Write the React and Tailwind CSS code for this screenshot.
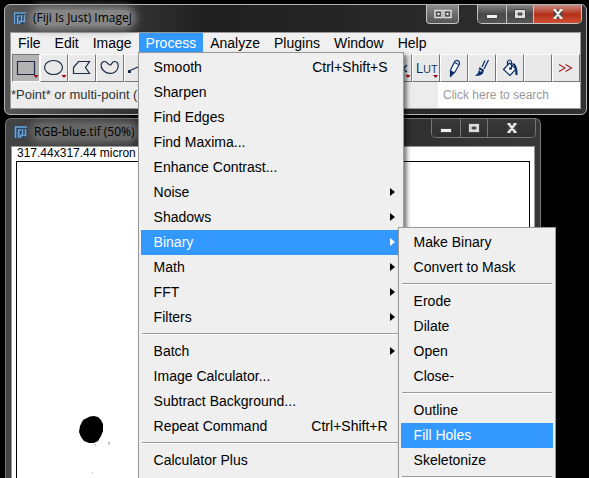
import React from "react";

const processMenu = [
  { label: "Smooth", shortcut: "Ctrl+Shift+S" },
  { label: "Sharpen" },
  { label: "Find Edges" },
  { label: "Find Maxima..." },
  { label: "Enhance Contrast..." },
  { label: "Noise", more: true },
  { label: "Shadows", more: true },
  { label: "Binary", more: true, active: true },
  { label: "Math", more: true },
  { label: "FFT", more: true },
  { label: "Filters", more: true },
  null,
  { label: "Batch", more: true },
  { label: "Image Calculator..." },
  { label: "Subtract Background..." },
  { label: "Repeat Command", shortcut: "Ctrl+Shift+R" },
  null,
  { label: "Calculator Plus" },
];

const binaryMenu = [
  { label: "Make Binary" },
  { label: "Convert to Mask" },
  null,
  { label: "Erode" },
  { label: "Dilate" },
  { label: "Open" },
  { label: "Close-" },
  null,
  { label: "Outline" },
  { label: "Fill Holes", active: true },
  { label: "Skeletonize" },
  null,
];

function FijiIcon() {
  return (
    <svg width="14" height="14" viewBox="0 0 14 14" className="shrink-0" aria-hidden="true">
      <path d="M0 1h13v9h-2v3H0z" fill="#29435e" />
      <path d="M1.500 13V2H13M4.500 13V5H7M4.500 8.500H6M8.500 4v6.500H6.500V13M11.500 4v6.500H9.500" fill="none" stroke="#6fa6da" strokeWidth="1.500" />
    </svg>
  );
}

function TitleBar({ title, dim, children }) {
  return (
    <header className="flex items-start justify-between h-[27px] pl-[8px] pr-[4px]">
      <div className="flex items-center gap-[6px] h-[26px]">
        <FijiIcon />
        <h1 className={dim
          ? "font-['Open_Sans','Noto_Sans',sans-serif] text-[12px] leading-[16px] text-black whitespace-nowrap rounded-full bg-[#656565] shadow-[0_0_7px_4px_#656565]"
          : "font-['Open_Sans','Noto_Sans',sans-serif] text-[12px] leading-[16px] text-black whitespace-nowrap rounded-full bg-[#858585] shadow-[0_0_8px_4px_#858585]"}>
          {title}
        </h1>
      </div>
      <div className="flex gap-[18px]">{children}</div>
    </header>
  );
}

function CaptionButtons({ dim }) {
  const face = dim ? "bg-linear-to-b from-[#393939] to-[#303030]" : "bg-linear-to-b from-[#858585] via-[#4a4a4a] via-50% to-[#555]";
  const close = dim ? "bg-linear-to-b from-[#393939] to-[#303030]" : "bg-linear-to-b from-[#c78a80] via-[#b5301a] via-50% to-[#cf4f32]";
  const frame = dim ? "border-[#777] divide-[#777]" : "border-[#c4c4c4] divide-[#c4c4c4]";
  return (
    <div className={`flex h-[19px] border border-t-0 divide-x rounded-b-[5px] overflow-hidden ${frame}`}>
      <button aria-label="Minimize" className={`w-[29px] flex justify-center items-center ${face}`}>
        <svg width="12" height="12"><path d="M.5 6.500h11v4H.5z" fill="#eee" stroke="#444" /></svg>
      </button>
      <button aria-label="Maximize" className={`w-[27px] flex justify-center items-center ${face}`}>
        <svg width="12" height="12"><path d="M.5 1.500h11v9H.5z" fill="#ddd" stroke="#444" /><path d="M4 5h4v2H4z" fill="#444" stroke="#555" /></svg>
      </button>
      <button aria-label="Close" className={`w-[47px] flex justify-center items-center ${close}`}>
        <svg width="14" height="12"><path d="M4 2.500l6 7M10 2.500l-6 7" stroke="#444" strokeWidth="5" /><path d="M2.500 2h3M8.500 2h3M2.500 10h3M8.500 10h3M4 2l6 8M10 2l-6 8" stroke="#eee" strokeWidth="2.200" /></svg>
      </button>
    </div>
  );
}

function MenuList({ items, label, className }) {
  return (
    <ul role="menu" aria-label={label} className={`absolute border border-[#999] bg-[#efefef] px-[2px] pt-[2px] pb-[20px] text-[14px] text-black shadow-[3px_3px_4px_rgba(0,0,0,0.5)] ${className}`}>
      {items.map((item, i) =>
        item === null ? (
          <li key={i} role="separator" className="h-[9px] px-px pt-[3px]">
            <div className="h-[2px] border-t border-[#999] bg-white" />
          </li>
        ) : (
          <li key={i} role="none" className="relative">
            <button role="menuitem" className={`flex w-full h-[25px] items-center justify-between pb-[2px] pl-[13px] whitespace-nowrap ${item.more ? "pr-[6px]" : "pr-[13px]"} ${item.active ? "bg-[#3399ff] text-white" : ""}`}>
              <span>{item.label}</span>
              {item.shortcut && <span>{item.shortcut}</span>}
              {item.more && (
                <svg width="5" height="8" viewBox="0 0 5 8" aria-hidden="true"><path d="M0 0l5 4-5 4z" fill="currentColor" /></svg>
              )}
            </button>
            {item.label === "Binary" && (
              <MenuList items={binaryMenu} label="Binary" className="left-[257px] -top-[3px] w-[158px] z-10" />
            )}
          </li>
        )
      )}
    </ul>
  );
}

function Tool({ label, active, arrow, children }) {
  return (
    <button aria-label={label} className={`relative w-[28px] h-[28px] shrink-0 flex items-center justify-center border ${active ? "bg-[#b3b3b3] border-l-[#777] border-t-[#777] border-r-white border-b-white" : "bg-[#e9e9e9] border-l-white border-t-white border-r-[#777] border-b-[#777]"}`}>
      <svg width="26" height="26" viewBox="0 0 26 26" fill="none" stroke="#0b2e66" strokeWidth="1.200">
        {children}
        {arrow && <path d="M20.500 20h5L23 23z" fill="#a00010" stroke="none" />}
      </svg>
    </button>
  );
}

function Toolbar() {
  return (
    <div className="flex justify-between h-[29px] pt-px pl-px overflow-hidden">
      <div className="flex">
        <Tool label="Rectangle" active arrow><path d="M4.500 6.500h17v13h-17z" stroke="#1b2c44" /></Tool>
        <Tool label="Oval" arrow><ellipse cx="12.500" cy="12.500" rx="9" ry="7" stroke="#1b2c44" /></Tool>
        <Tool label="Polygon"><path d="M9.500 6.500h11l-4 6 4 6h-16v-6z" stroke="#1b2c44" /></Tool>
        <Tool label="Freehand"><path d="M7.500 6.500C3.500 6.500 3 12 6 15c4 4.500 11 4.500 14 0 2.500-4 1-8.500-2.500-8.500-3.500 0-2 3.500-4.500 3.500s-2-3.500-5.500-3.500z" stroke="#1b2c44" /></Tool>
        <Tool label="Line"><path d="M4 16L22 8" stroke="#1b2c44" /><path d="M3 15h3v3H3z" fill="#1b2c44" stroke="none" /></Tool>
      </div>
      <div className="flex">
        <Tool label="Developer menu" arrow><path d="M18 9v8M22 10l-4 4 4 3" /></Tool>
        <button aria-label="LUT" className="relative w-[28px] h-[28px] pl-px border border-l-white border-t-white border-r-[#777] border-b-[#777] bg-[#e9e9e9] text-[#0b2e66] font-['Open_Sans',sans-serif] text-[14px] leading-[24px] text-center">
          L<span className="text-[11px]">UT</span>
          <svg width="5" height="3" className="absolute right-px bottom-[3px]"><path d="M0 0h5L2.500 3z" fill="#a00010" /></svg>
        </button>
        <Tool label="Pencil"><path d="M9.500 15l4.500-9 2-.5 2 1 .5 2.500-4.500 8-4 4z" fill="#f6f8fb" strokeWidth="1.200" /><path d="M9.500 16l3 1.500-3 3.500zM13.500 7.500l4 2" fill="#0b2e66" /></Tool>
        <Tool label="Brush"><path d="M19.500 5l-4.500 9M16 5.500L13 12" /><path d="M10.500 12l4.500 3-1 3.500-3 2-5 .5 3-3z" fill="#0b2e66" stroke="none" /><path d="M10.500 15l2 1.500" stroke="#e9e9e9" /></Tool>
        <Tool label="Flood fill"><path d="M6.500 14.500l6-6.500 6.500 6-6 6.500z" fill="#f6f8fb" /><path d="M10.500 10V6.500q2-3 4 0v7" /><path d="M12 12.500h3v2h-3z" fill="#0b2e66" stroke="none" /><path d="M15.500 9q4 0 4 11" strokeWidth="2.200" /></Tool>
        <Tool label="Empty tool" />
        <Tool label="More tools"><path d="M6 9.500l6 3.500-6 3.500M12.500 9.500l6 3.500-6 3.500" stroke="#a3262e" strokeWidth="1.200" /></Tool>
      </div>
    </div>
  );
}

export default function App() {
  return (
    <main className="h-screen overflow-hidden bg-black flex flex-col gap-[3px] px-[4px] pt-[4px] font-['Liberation_Sans',Arial,sans-serif]">
      <section aria-label="ImageJ" className="relative z-10 -mr-[2px] rounded-[6px] border border-[#b5b5b5] bg-linear-to-r from-[#555] via-[#202020] via-35% to-[#303030] pb-[5px]">
        <TitleBar title="(Fiji Is Just) ImageJ">
          <button aria-label="Arrange windows" className="flex items-center justify-center w-[33px] h-[19px] rounded-b-[4px] border border-t-0 border-[#c4c4c4] bg-linear-to-b from-[#8c8c8c] to-[#555]">
            <svg width="20" height="10"><path d="M2 1.500h7v7H2zM11 1.500h7v7h-7z" fill="#555" stroke="#ddd" strokeWidth="1.500" /><path d="M4.500 4h2v2h-2zM13.500 4h2v2h-2z" fill="#eee" /></svg>
          </button>
          <CaptionButtons />
        </TitleBar>
        <div className="mx-[5px] border border-[#999] bg-[#ececec]">
          <nav className="flex h-[20px] bg-[#f0f0f0] text-[14px] leading-[19px] text-black">
            {["File", "Edit", "Image", "Process", "Analyze", "Plugins", "Window", "Help"].map((name) => (
              <div key={name} className={name === "Process" ? "relative z-20" : "relative"}>
                <button className={`px-[7px] h-[20px] ${name === "Process" ? "bg-[#3399ff] text-white" : ""}`}>{name}</button>
                {name === "Process" && <MenuList items={processMenu} label="Process" className="-left-px top-[19px] w-[266px] leading-[20px]" />}
              </div>
            ))}
          </nav>
          <Toolbar />
          <div className="flex justify-between h-[26px]">
            <p className="text-[13px] leading-[26px] text-[#333] whitespace-nowrap">*Point* or multi-point (</p>
            <input aria-label="Search" placeholder="Click here to search" className="w-[142px] bg-white px-[5px] text-[12px] placeholder:text-[#999] outline-none" />
          </div>
        </div>
      </section>

      <section aria-label="RGB-blue.tif" className="flex-1 min-h-0 flex flex-col ml-px w-full max-w-[536px] rounded-t-[6px] border border-b-0 border-[#777] bg-linear-to-r from-[#444] via-[#242424] via-40% to-[#383838]">
        <TitleBar title="RGB-blue.tif (50%)" dim>
          <CaptionButtons dim />
        </TitleBar>
        <div className="flex-1 min-h-0 flex flex-col mx-[5px] px-[4px] bg-white border border-b-0 border-[#999]">
          <p className="h-[14px] text-[12px] leading-[13px] px-px text-black whitespace-nowrap">317.44x317.44 micron</p>
          <div className="flex-1 min-h-0 border border-b-0 border-black overflow-hidden">
            <svg width="120" height="316" viewBox="0 0 120 316" aria-label="Image canvas">
              <path d="M73 254.500l4-.5 4 1 3 3 2 4v7l-2 5-3 5-4 2h-5l-5-2-3-4-2-5 1-6 3-6z" fill="#000" />
              <path d="M77 283h2M91 280l2 1-2 2M75 311h1" stroke="#aaa" fill="none" />
            </svg>
          </div>
        </div>
      </section>
    </main>
  );
}
